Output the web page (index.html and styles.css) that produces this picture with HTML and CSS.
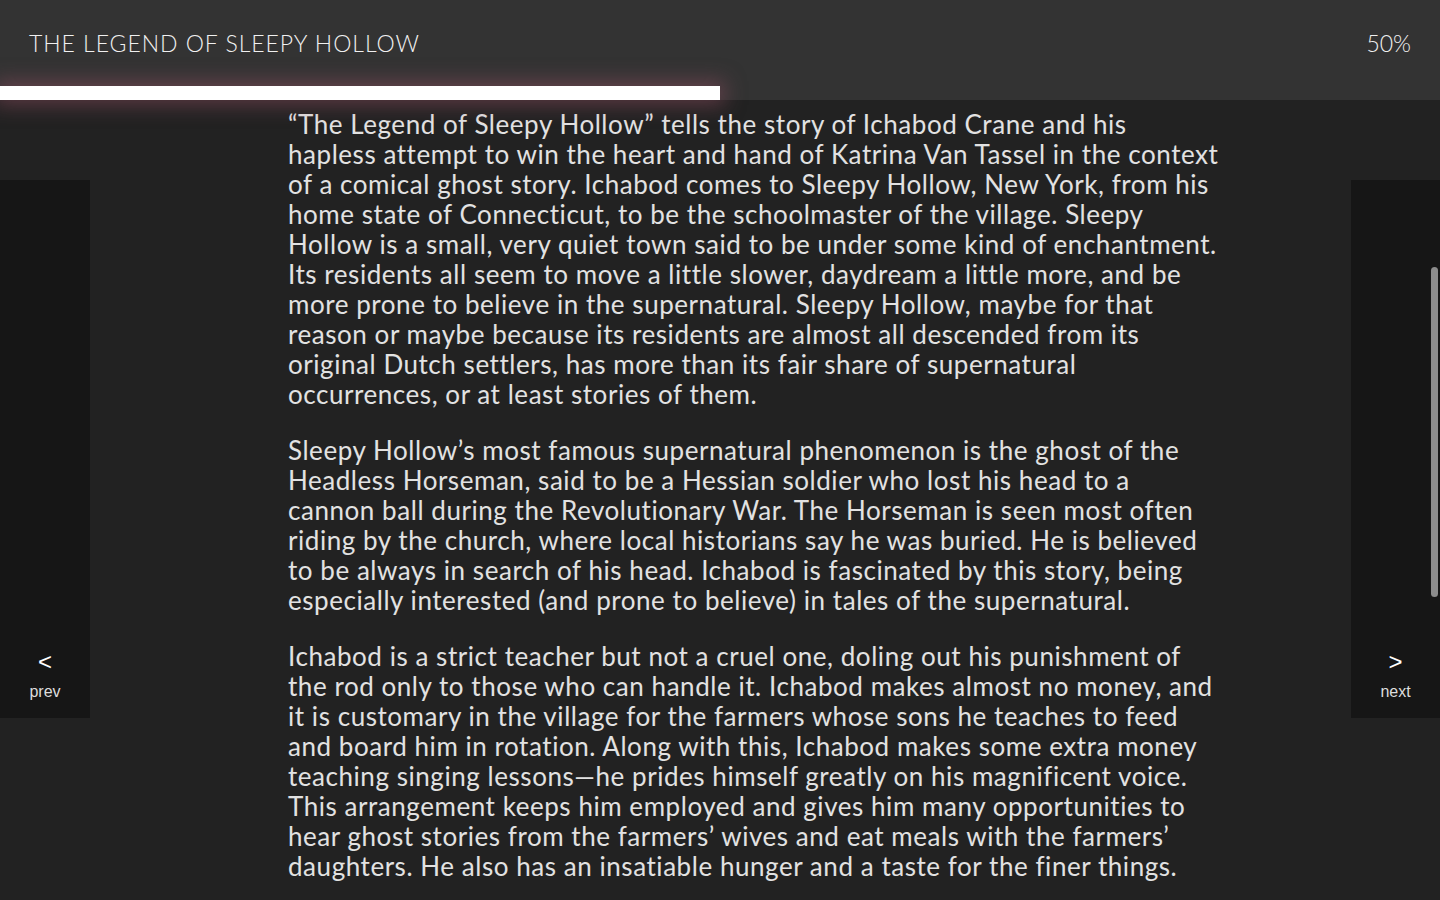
FILE: index.html
```html
<!DOCTYPE html>
<html lang="en">
<head>
<meta charset="utf-8">
<title>The Legend of Sleepy Hollow</title>
<link rel="stylesheet" href="styles.css">
</head>
<body>
<header class="topbar">
  <div class="topbar-row">
    <h1 class="book-title">THE LEGEND OF SLEEPY HOLLOW</h1>
    <span class="percent">50%</span>
  </div>
  <div class="progress"><div class="progress-fill" style="width:50%"></div></div>
</header>
<main class="reader">
  <article class="page">
    <p>“The Legend of Sleepy Hollow” tells the story of Ichabod Crane and his<br>hapless attempt to win the heart and hand of Katrina Van Tassel in the context<br>of a comical ghost story. Ichabod comes to Sleepy Hollow, New York, from his<br>home state of Connecticut, to be the schoolmaster of the village. Sleepy<br>Hollow is a small, very quiet town said to be under some kind of enchantment.<br>Its residents all seem to move a little slower, daydream a little more, and be<br>more prone to believe in the supernatural. Sleepy Hollow, maybe for that<br>reason or maybe because its residents are almost all descended from its<br>original Dutch settlers, has more than its fair share of supernatural<br>occurrences, or at least stories of them.</p>
    <p>Sleepy Hollow’s most famous supernatural phenomenon is the ghost of the<br>Headless Horseman, said to be a Hessian soldier who lost his head to a<br>cannon ball during the Revolutionary War. The Horseman is seen most often<br>riding by the church, where local historians say he was buried. He is believed<br>to be always in search of his head. Ichabod is fascinated by this story, being<br>especially interested (and prone to believe) in tales of the supernatural.</p>
    <p>Ichabod is a strict teacher but not a cruel one, doling out his punishment of<br>the rod only to those who can handle it. Ichabod makes almost no money, and<br>it is customary in the village for the farmers whose sons he teaches to feed<br>and board him in rotation. Along with this, Ichabod makes some extra money<br>teaching singing lessons—he prides himself greatly on his magnificent voice.<br>This arrangement keeps him employed and gives him many opportunities to<br>hear ghost stories from the farmers’ wives and eat meals with the farmers’<br>daughters. He also has an insatiable hunger and a taste for the finer things.</p>
  </article>
</main>
<a class="nav nav-prev" href="#"><span class="nav-arrow">&lt;</span><span class="nav-label">prev</span></a>
<a class="nav nav-next" href="#"><span class="nav-arrow">&gt;</span><span class="nav-label">next</span></a>
<div class="scroll-thumb"></div>
</body>
</html>
```
FILE: styles.css
```css
html, body {
  margin: 0;
  padding: 0;
  height: 100%;
  overflow: hidden;
}
body {
  background: #222222;
  color: #e2e2e2;
  font-family: "Lato", "Open Sans", sans-serif;
}
.topbar {
  background: #333333;
  height: 100px;
  display: flex;
  flex-direction: column;
  position: relative;
  z-index: 2;
}
.topbar-row {
  flex: 1;
  display: flex;
  align-items: center;
  justify-content: space-between;
  padding: 0 29px 0 29px;
}
.book-title {
  margin: 0;
  font-size: 23px;
  font-weight: 300;
  color: #f0f0f0;
  letter-spacing: 0.95px;
}
.percent {
  font-size: 23px;
  font-weight: 300;
  color: #f0f0f0;
}
.progress {
  height: 14px;
}
.progress-fill {
  height: 100%;
  background: #ffffff;
  box-shadow: 0 0 20px 5px rgba(150, 80, 100, 0.5);
}
.reader {
  display: flex;
  justify-content: flex-start;
  padding-left: 288px;
  padding-top: 9px;
}
.page {
  width: 960px;
}
.page p {
  margin: 0 0 26px 0;
  font-size: 26px;
  line-height: 30px;
  letter-spacing: 0.55px;
  white-space: nowrap;
}
.nav {
  position: absolute;
  top: 180px;
  height: 538px;
  width: 90px;
  background: #161616;
  color: #ffffff;
  text-decoration: none;
  display: flex;
  flex-direction: column;
  align-items: center;
  justify-content: flex-end;
  padding-bottom: 17px;
  box-sizing: border-box;
}
.nav-prev { left: 0; }
.nav-next { right: 0; width: 89px; }
.nav-arrow {
  font-size: 24px;
  line-height: 26px;
  margin-bottom: 2px;
  font-family: "Liberation Sans", sans-serif;
}
.nav-label {
  font-size: 16px;
  color: #dddddd;
  margin-top: 6px;
  font-family: "Liberation Sans", sans-serif;
}
.scroll-thumb {
  position: absolute;
  left: 1431px;
  top: 267px;
  width: 7px;
  height: 330px;
  border-radius: 4px;
  background: #8c8c8c;
}
```
